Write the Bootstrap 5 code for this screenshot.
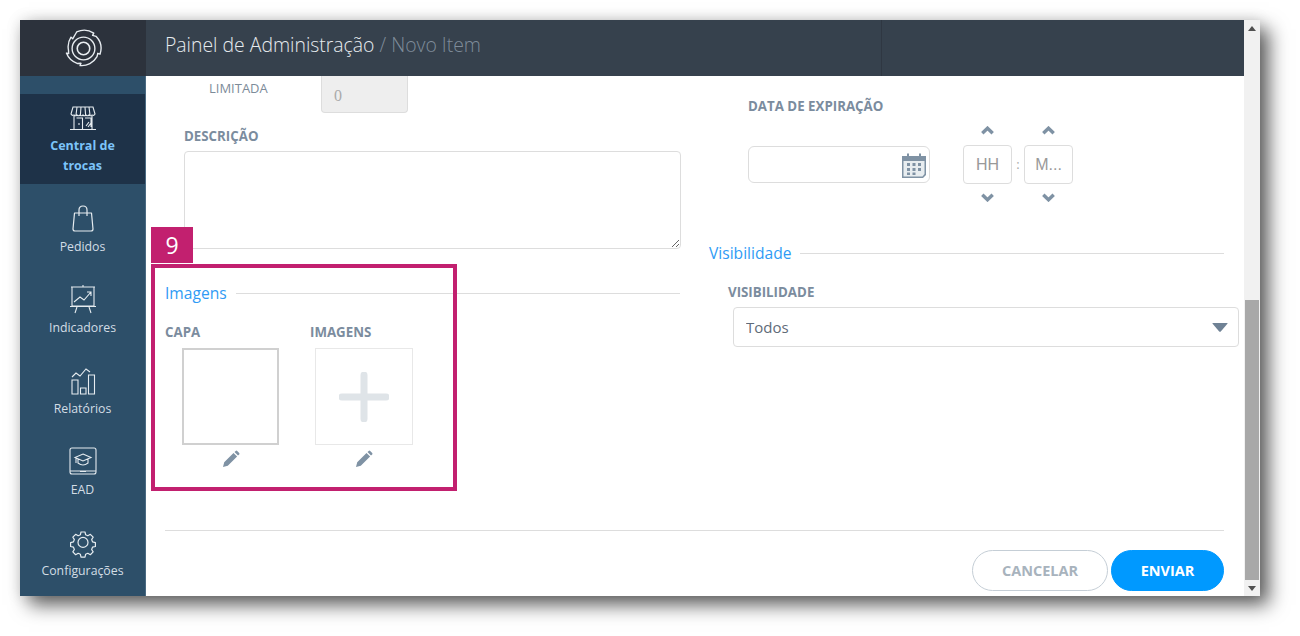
<!DOCTYPE html>
<html lang="pt-BR">
<head>
<meta charset="utf-8">
<title>Novo Item</title>
<link rel="stylesheet" href="https://cdn.jsdelivr.net/npm/bootstrap@5.3.0/dist/css/bootstrap.min.css">
<style>
html,body{height:100%;overflow:hidden;background:#fff;}
body{font-family:"Open Sans","Liberation Sans",sans-serif;}
.app-win{position:absolute;left:20px;top:20px;width:1240px;height:576px;background:#fff;overflow:hidden;}
.win-shadow{position:absolute;left:20px;top:20px;width:1240px;height:576px;box-shadow:9px 9px 18px rgba(0,0,0,.62),0 0 14px rgba(0,0,0,.12);}
.side-rail{width:126px;background:#2d4f69;flex:none;border-right:1px solid #4a6a82;}
.rail-logo{height:56px;background:#2c323c;margin-right:-1px;}
.rail-gap{height:18px;}
.rail-item{height:81px;color:#d3dde5;font-size:12.3px;line-height:20px;text-decoration:none;}
.rail-item svg{display:block;height:32px;width:32px;margin-bottom:3px;}
.rail-active{height:90px;background:#1e3248;color:#7cc4fa;font-weight:700;font-size:12.5px;}
.rail-active span{width:90px;}
.main-col{width:1098px;flex:none;}
.top-head{height:56px;background:#36414d;color:#e6ebef;font-size:19.400px;font-weight:300;padding-left:19px;}
.top-head>span:first-child{padding-bottom:7px;}
.top-head em{font-style:normal;color:#7f8c9a;}
.head-seg{margin-left:auto;width:363px;height:100%;border-left:1px solid #2f3742;}
.form-left{width:534px;padding-left:19px;flex:none;}
.form-right{width:515px;margin-left:29px;flex:none;}
.form-cols{height:454px;}
.limit-row{height:37px;padding-left:44px;}
.limit-label{width:112px;font-size:13px;line-height:24px;color:#7d8b99;}
.limit-input{width:87px;height:37px;background:#eee;border:1px solid #ddd;border-top:0;border-radius:0 0 4px 4px;color:#aaa;font-family:"Liberation Serif",serif;font-size:16px;padding:8px 12px;line-height:24px;}
.field-cap{font-size:13.300px;font-weight:700;line-height:20px;color:#7b8c9e;}
.cap-desc{margin:13px 0 5px 19px;}
.desc-area{display:block;width:497px;margin-left:19px;height:98px;border:1px solid #ddd;border-radius:4px;box-shadow:none;}
.sect-title{color:#2f9bf5;font-size:15.600px;line-height:20px;gap:9px;}
.sect-title::after{content:"";flex:1;height:1px;background:#ddd;}
.sect-img{margin-top:34px;}
.thumb-wrap{margin-top:19px;}
.thumb-first{width:145px;}
.thumb-box{height:97px;margin-top:6px;background:#fff;}
.thumb-cover{width:97px;margin-left:17px;border:2px solid #d0d0d0;}
.thumb-add{width:98px;margin-left:5px;border:1px solid #e8e8e8;}
.pen-ic{display:block;width:18px;height:18px;margin-top:5px;}
.pen-cover{margin-left:57px;}
.pen-add{margin-left:45px;}
.cap-exp{margin:20px 0 0 39px;}
.date-row{margin:6px 0 0 39px;}
.date-field{width:182px;height:37px;margin-top:24px;border:1px solid #ddd;border-radius:6px;padding-right:2px;}
.time-group{margin-left:33px;}
.time-col{width:49px;}
.time-up{height:23px;padding-bottom:6px;}
.time-down{height:23px;padding-top:3px;}
.time-box{width:49px;height:39px;border:1px solid #ddd;border-radius:4px;padding:0;text-align:center;font-family:"Liberation Sans",sans-serif;font-size:16px;}
.time-box::placeholder{color:#999;opacity:1;}
.time-sep{width:12px;line-height:85px;color:#aaa;font-size:13px;text-align:center;}
.sect-vis{margin-top:36px;}
.cap-vis{margin:19px 0 5px 19px;}
.vis-select{width:506px;height:40px;margin-left:24px;border:1px solid #ddd;border-radius:4px;color:#5f6b78;font-size:15px;padding:0 12px;background-size:16px 9px;background-position:right 10px center;background-image:url("data:image/svg+xml,%3Csvg xmlns='http://www.w3.org/2000/svg' viewBox='0 0 16 9'%3E%3Cpath d='M1 0h14q1 0 .4.8L8.8 8.4q-.8.8-1.6 0L.6.8Q0 0 1 0z' fill='%236f8295'/%3E%3C/svg%3E");}
.form-foot{margin:0 20px 0 19px;border-top:1px solid #ddd;padding-top:19px;gap:3px;}
.btn-cancel,.btn-send{height:41px;border-radius:21px;font-size:14.500px;font-weight:700;padding:0;}
.btn-cancel{width:136px;background:#fff;border:1px solid #c5ced6;color:#a8b3bd;}
.btn-send{width:113px;background:#0099ff;border:1px solid #0099ff;color:#fff;}
.fake-scroll{width:16px;flex:none;background:#f1f1f1;}
.scroll-up,.scroll-down{height:16px;}
.scroll-fill{flex:1;}
.scroll-thumb{height:280px;background:#a8a8a8;margin:0 1px;}
.call-tag{position:absolute;left:131px;top:207px;width:42px;height:36px;background:#c2206f;color:#fff;font-size:23px;line-height:36px;text-align:center;}
.call-frame{position:absolute;left:131px;top:244px;width:306px;height:227px;border:4px solid #c2206f;}
</style>
</head>
<body class="m-0">
<div class="win-shadow"></div>
<div class="app-win d-flex">
  <aside class="side-rail">
    <div class="rail-logo d-flex align-items-center justify-content-center">
      <svg width="41" height="41" viewBox="0 0 36 36" fill="none" stroke="#e8edf1" stroke-width="1.200"><path d="M12 3.500A15.500 15.500 0 0 1 27 4.500l-1 2 3 .8A15.500 15.500 0 0 1 32.500 23l-2-.8-.6 3A15.500 15.500 0 0 1 15 33l.8-2-3 .2A15.500 15.500 0 0 1 3 22l2 .4-.2-3A15.500 15.500 0 0 1 7 8l1.500 1.500z" stroke-linejoin="round"/><circle cx="18" cy="18" r="10"/><circle cx="18" cy="18" r="5.500" stroke-width="1.400"/></svg>
    </div>
    <div class="rail-gap"></div>
    <a class="rail-item rail-active d-flex flex-column align-items-center text-center justify-content-end pb-2" href="#">
      <svg viewBox="0 0 32 32" fill="none" stroke="#e6ecf0" stroke-width="1.100"><path d="M6 6h20l2 7q-1 2-3 1-1 1.500-3 0-1.500 1.500-3 0-1.500 1.500-3 0-1.500 1.500-3 0-1.500 1.500-3 0-1.500 1.500-3 0-2 1-3-1zM10 6l-1 8M14 6l-.6 8M18 6l.6 8M22 6l1 8M7 15v13M25 15v13M3 28.500h26M9.500 17h6v11M18 17h6v9M12 22v2M19 25l3-4M21 26l3-4"/></svg>
      <span>Central de trocas</span>
    </a>
    <a class="rail-item d-flex flex-column align-items-center justify-content-end pb-2" href="#">
      <svg viewBox="0 0 32 32" fill="none" stroke="#e6ecf0" stroke-width="1.200"><path d="M7.500 11h17l1.500 16q0 2-2 2H8q-2 0-2-2zM12 14V8q0-4 4-4t4 4v6" stroke-linejoin="round"/></svg>
      <span>Pedidos</span>
    </a>
    <a class="rail-item d-flex flex-column align-items-center justify-content-end pb-2" href="#">
      <svg viewBox="0 0 32 32" fill="none" stroke="#e6ecf0" stroke-width="1.100"><path d="M4 4h24M5 4v19h22V4M3 23.500h26M16 2v2M10 24l-2 6M22 24l2 6M7 19l6-5 4 3 7-8M20 9h4v4"/></svg>
      <span>Indicadores</span>
    </a>
    <a class="rail-item d-flex flex-column align-items-center justify-content-end pb-2" href="#">
      <svg viewBox="0 0 32 32" fill="none" stroke="#e6ecf0" stroke-width="1.100"><path d="M5 16h6v14H5zM13.500 24h5.500v6h-5.500zM21.500 11h6v19h-6zM5 13l4-4 4 3 6-7 4 3"/></svg>
      <span>Relatórios</span>
    </a>
    <a class="rail-item d-flex flex-column align-items-center justify-content-end pb-2" href="#">
      <svg viewBox="0 0 32 32" fill="none" stroke="#e6ecf0" stroke-width="1.100"><path d="M5 3h22q2 0 2 2v21H3V5q0-2 2-2zM3 26v1q0 2 2 2h22q2 0 2-2v-1M13 26.500h6M16 9l8 3.500-8 3.500-8-3.500zM11 14v4q5 4 10 0v-4M9 13v5"/></svg>
      <span>EAD</span>
    </a>
    <a class="rail-item d-flex flex-column align-items-center justify-content-end pb-2" href="#">
      <svg viewBox="0 0 32 32" fill="none" stroke="#e6ecf0" stroke-width="1.200"><path d="M13.500 3h5l.8 3.500 2.700 1.200 3.200-1.800 3.500 3.500-1.900 3.100 1.100 2.800 3.600.9v4.900l-3.600.9-1.100 2.800 1.900 3.100-3.500 3.500-3.200-1.800-2.700 1.200-.8 3.500h-5l-.8-3.500-2.700-1.200-3.200 1.800-3.500-3.500 1.900-3.100-1.100-2.800-3.600-.9v-4.900l3.600-.9 1.100-2.800-1.900-3.100 3.500-3.500 3.200 1.800 2.700-1.200z" transform="translate(3.200 3.600) scale(.8)" stroke-linejoin="round" stroke-width="1.500"/><circle cx="16" cy="16.400" r="5"/></svg>
      <span>Configurações</span>
    </a>
  </aside>
  <div class="main-col d-flex flex-column">
    <header class="top-head d-flex align-items-center">
      <span>Painel de Administração <em>/ Novo Item</em></span>
      <span class="head-seg"></span>
    </header>
    <main class="flex-grow-1">
      <div class="form-cols d-flex">
        <section class="form-left">
          <div class="limit-row d-flex">
            <span class="limit-label">LIMITADA</span>
            <div class="limit-input">0</div>
          </div>
          <div class="field-cap cap-desc">DESCRIÇÃO</div>
          <textarea class="form-control desc-area" aria-label="Descrição"></textarea>
          <div class="sect-title sect-img d-flex align-items-center">Imagens</div>
          <div class="thumb-wrap d-flex">
            <div class="thumb-first">
              <div class="field-cap">CAPA</div>
              <div class="thumb-box thumb-cover"></div>
              <svg class="pen-ic pen-cover" viewBox="0 0 18 18"><path d="M1 17l1.200-4.800L11.500 3l3.600 3.600-9.300 9.200zM12.500 2l1.200-1.100q.8-.6 1.500 0l2 2q.6.700 0 1.500L16 5.600z" fill="#7f92a4"/></svg>
            </div>
            <div>
              <div class="field-cap">IMAGENS</div>
              <div class="thumb-box thumb-add d-flex align-items-center justify-content-center">
                <svg width="50" height="50" viewBox="0 0 50 50"><path d="M25 3v44M3 25h44" stroke="#dfe4e8" stroke-width="7" stroke-linecap="round"/></svg>
              </div>
              <svg class="pen-ic pen-add" viewBox="0 0 18 18"><path d="M1 17l1.200-4.800L11.500 3l3.600 3.600-9.300 9.200zM12.500 2l1.200-1.100q.8-.6 1.500 0l2 2q.6.700 0 1.500L16 5.600z" fill="#7f92a4"/></svg>
            </div>
          </div>
        </section>
        <section class="form-right">
          <div class="field-cap cap-exp">DATA DE EXPIRAÇÃO</div>
          <div class="date-row d-flex align-items-start">
            <div class="date-field d-flex align-items-center justify-content-end">
              <svg width="26" height="26" viewBox="0 0 26 26"><path d="M1 4h24v19l-3 3H1z" fill="#7f92a4"/><path d="M2.500 9h21v13l-2 2.500H2.500z" fill="#e8edf0"/><path d="M6 1.500h2v5H6zM18 1.500h2v5h-2z" fill="#7f92a4"/><path d="M6 11h3v3H6zM11.500 11h3v3h-3zM17 11h3v3h-3zM6 16h3v3H6zM11.500 16h3v3h-3zM17 16h3v3h-3zM6 20.500h3v2.500H6zM11.500 20.500h3v2.500h-3z" fill="#7f92a4"/></svg>
            </div>
            <div class="time-group d-flex">
              <div class="time-col d-flex flex-column align-items-center">
                <div class="time-up d-flex align-items-center"><svg width="13" height="9" viewBox="0 0 13 9"><path d="M1.300 7.200L6.500 2.200l5.200 5" fill="none" stroke="#7f92a4" stroke-width="3.400"/></svg></div>
                <input class="form-control time-box" placeholder="HH" aria-label="Horas">
                <div class="time-down d-flex align-items-center"><svg width="13" height="9" viewBox="0 0 13 9"><path d="M1.300 1.800L6.500 6.800l5.200-5" fill="none" stroke="#7f92a4" stroke-width="3.400"/></svg></div>
              </div>
              <div class="time-sep">:</div>
              <div class="time-col d-flex flex-column align-items-center">
                <div class="time-up d-flex align-items-center"><svg width="13" height="9" viewBox="0 0 13 9"><path d="M1.300 7.200L6.500 2.200l5.200 5" fill="none" stroke="#7f92a4" stroke-width="3.400"/></svg></div>
                <input class="form-control time-box" placeholder="M..." aria-label="Minutos">
                <div class="time-down d-flex align-items-center"><svg width="13" height="9" viewBox="0 0 13 9"><path d="M1.300 1.800L6.500 6.800l5.200-5" fill="none" stroke="#7f92a4" stroke-width="3.400"/></svg></div>
              </div>
            </div>
          </div>
          <div class="sect-title sect-vis d-flex align-items-center">Visibilidade</div>
          <div class="field-cap cap-vis">VISIBILIDADE</div>
          <select class="form-select vis-select" aria-label="Visibilidade"><option>Todos</option></select>
        </section>
      </div>
      <footer class="form-foot d-flex justify-content-end">
        <button class="btn btn-cancel" type="button">CANCELAR</button>
        <button class="btn btn-send" type="button">ENVIAR</button>
      </footer>
    </main>
  </div>
  <div class="fake-scroll d-flex flex-column">
    <div class="scroll-up d-flex align-items-center justify-content-center"><svg width="8" height="5" viewBox="0 0 8 5"><path d="M4 0l4 5H0z" fill="#505050"/></svg></div>
    <div class="scroll-fill"></div>
    <div class="scroll-thumb"></div>
    <div class="scroll-down d-flex align-items-center justify-content-center"><svg width="8" height="5" viewBox="0 0 8 5"><path d="M0 0h8L4 5z" fill="#505050"/></svg></div>
  </div>
  <div class="call-tag">9</div>
  <div class="call-frame"></div>
</div>
<script src="https://cdn.jsdelivr.net/npm/bootstrap@5.3.0/dist/js/bootstrap.bundle.min.js"></script>
</body>
</html>
